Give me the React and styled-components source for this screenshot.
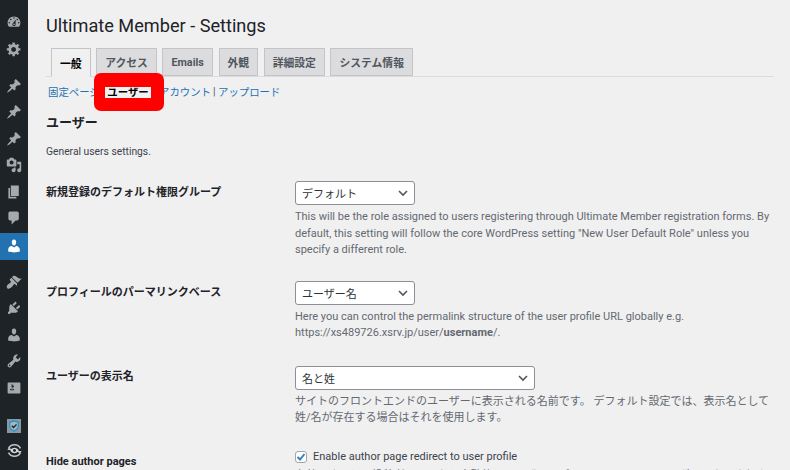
import React from "react";
import styled, { createGlobalStyle } from "styled-components";

const Global = createGlobalStyle`
  html, body { margin: 0; padding: 0; width: 790px; height: 470px; overflow: hidden; background: #f0f0f1; }
  body { font-family: Roboto, "Noto Sans CJK JP", sans-serif; font-size: 11px; color: #3c434a; }
  #root { height: 470px; }
`;
const Page = styled.div`display: flex; width: 790px; height: 470px; overflow: hidden; position: relative;`;
const Sidebar = styled.nav`
  width: 28px; flex: none; background: #1d2327; display: flex; flex-direction: column; padding-top: 12px; box-sizing: border-box;
`;
const MenuItem = styled.div`
  height: ${p => p.$h || 26.5}px; margin-top: ${p => p.$mt || 0}px; display: flex; align-items: center; justify-content: center; flex: none;
  background: ${p => p.$active ? "#2271b1" : "transparent"};
  color: ${p => p.$active ? "#fff" : "#a7aaad"};
  svg { width: 16px; height: 16px; fill: currentColor; display: block; }
`;
const Main = styled.main`flex: 1; padding: 0 16px 0 18px; min-width: 0;`;
const Title = styled.h1`margin: 15px 0 0; font-size: 18.15px; line-height: 22px; font-weight: 400; color: #1d2327;`;
const Tabs = styled.div`
  display: flex; gap: 5.6px; margin-top: 11px; padding-left: 5px; height: 28px; border-bottom: 1px solid #dcdcde;
`;
const Tab = styled.div`
  box-sizing: border-box; height: ${p => p.$active ? 29 : 28}px; padding: 0 8px; display: flex; align-items: center;
  border: 1px solid #c3c4c7; ${p => p.$active ? "border-bottom-color: #f0f0f1;" : ""}
  background: ${p => p.$active ? "#f0f0f1" : "#dcdcde"};
  color: ${p => p.$active ? "#000" : "#50575e"}; font-size: 10.8px; font-weight: 700; white-space: nowrap;
`;
const SubNav = styled.div`display: flex; margin-top: 6px; padding-left: 2px; height: 16px; align-items: center; font-size: 10.4px; color: #2271b1; white-space: nowrap;`;
const SubLink = styled.span`width: ${p => p.$w}px; flex: none;`;
const Sep = styled.span`color: #50575e; width: ${p => p.$w || 5}px; flex: none;`;
const Callout = styled.div`
  position: absolute; left: 94px; top: 73px; width: 70px; height: 38px; background: #ff0000; border-radius: 7px;
  display: flex; align-items: center; justify-content: center;
`;
const CalloutLabel = styled.span`
  background: #f0f0f1; color: #000; font-size: 10.4px; line-height: 11px; font-weight: 700; padding: 0 2px; position: relative; left: -1px;
`;
const SectionTitle = styled.h2`margin: 16px 0 0; font-size: 13px; line-height: 16px; font-weight: 700; color: #1d2327;`;
const Intro = styled.p`margin: 13px 0 0; font-size: 10.3px; line-height: 16px; color: #3c434a;`;
const Form = styled.div`margin-top: 21px; display: grid; grid-template-columns: 249px 1fr;`;
const Label = styled.div`font-size: 11px; line-height: 16px; font-weight: 700; color: #1d2327; padding-top: 4px; margin-top: ${p => p.$mt || 0}px;`;
const Field = styled.div`margin-top: ${p => p.$mt || 0}px; min-width: 0;`;
const Select = styled.div`
  box-sizing: border-box; width: ${p => p.$w}px; height: 24px; background: #fff; border: 1px solid #8c8f94; border-radius: 3px;
  display: flex; align-items: center; justify-content: space-between; padding: 0 5px 0 6px; font-size: 11px; color: #2c3338;
  svg { width: 12px; height: 12px; stroke: #50575e; fill: none; stroke-width: 1.6; }
`;
const Desc = styled.p`margin: ${p => p.$mt ?? 4}px 0 0; font-size: 11px; line-height: 16.5px; color: #646970;`;
const CheckRow = styled.div`display: flex; align-items: center; gap: 6px; font-size: 11px; line-height: 14px; color: #3c434a;`;
const Check = styled.span`
  box-sizing: border-box; width: 12px; height: 12px; background: #fff; border: 1px solid #a2a5a9; border-radius: 3px; display: flex; align-items: center; justify-content: center; flex: none;
  svg { width: 12px; height: 12px; stroke: #2f80c2; fill: none; stroke-width: 1.9; flex: none; }
`;

const Chevron = () => <svg viewBox="0 0 12 12"><path d="M2 4l4 4 4-4" /></svg>;
const D = ({ d }) => <svg viewBox="0 0 20 20"><path d={d} /></svg>;
const P = {
  dash: "M3.76 16h12.48c1.1-1.37 1.76-3.11 1.76-5 0-4.42-3.58-8-8-8s-8 3.58-8 8c0 1.89.66 3.63 1.76 5zM10 4c.55 0 1 .45 1 1s-.45 1-1 1-1-.45-1-1 .45-1 1-1zM6 6c.55 0 1 .45 1 1s-.45 1-1 1-1-.45-1-1 .45-1 1-1zm8 0c.55 0 1 .45 1 1s-.45 1-1 1-1-.45-1-1 .45-1 1-1zm-5.37 5.55L12 7v6c0 1.1-.9 2-2 2s-2-.9-2-2c0-.57.24-1.08.63-1.45zM4 10c.55 0 1 .45 1 1s-.45 1-1 1-1-.45-1-1 .45-1 1-1zm12 0c.55 0 1 .45 1 1s-.45 1-1 1-1-.45-1-1 .45-1 1-1zm-5 3c0-.55-.45-1-1-1s-1 .45-1 1 .45 1 1 1 1-.45 1-1z",
  gear: "M18 12h-2.18c-.17.7-.44 1.35-.81 1.93l1.54 1.54-2.1 2.1-1.54-1.54c-.58.36-1.23.63-1.91.79V19H8v-2.18c-.68-.16-1.33-.43-1.91-.79l-1.54 1.54-2.12-2.12 1.54-1.54c-.36-.58-.63-1.23-.79-1.91H1V9.03h2.17c.16-.7.44-1.35.8-1.94L2.43 5.55l2.1-2.1 1.54 1.54c.58-.37 1.24-.64 1.93-.81V2h3v2.18c.68.16 1.33.43 1.91.79l1.54-1.54 2.12 2.12-1.54 1.54c.36.59.64 1.24.8 1.94H18V12zm-8.5 1.5c1.66 0 3-1.34 3-3s-1.34-3-3-3-3 1.34-3 3 1.34 3 3 3z",
  pin: "M10.44 3.02l1.82-1.82 6.36 6.35-1.83 1.82c-1.05-.68-2.48-.57-3.41.36l-.75.75c-.92.93-1.04 2.35-.35 3.41l-1.83 1.82-2.41-2.41-2.8 2.79c-.42.42-3.38 2.71-3.8 2.29s1.86-3.39 2.28-3.81l2.79-2.79L4.1 9.36l1.83-1.82c1.05.69 2.48.57 3.41-.36l.75-.75c.93-.92 1.04-2.35.35-3.41z",
  media: "M13 11V4c0-.55-.45-1-1-1h-1.67L9 1H5L3.67 3H2c-.55 0-1 .45-1 1v7c0 .55.45 1 1 1h10c.55 0 1-.45 1-1zM7 4.5c1.38 0 2.5 1.12 2.5 2.5S8.38 9.5 7 9.5 4.5 8.38 4.5 7 5.62 4.5 7 4.5zM14 6h5v10.5c0 1.38-1.12 2.5-2.5 2.5S14 17.88 14 16.5s1.12-2.5 2.5-2.5c.17 0 .34.02.5.05V9h-3V6zm-4 8.05V13h2v3.5c0 1.38-1.12 2.5-2.5 2.5S7 17.88 7 16.5 8.12 14 9.5 14c.17 0 .34.02.5.05z",
  pages: "M6 15V2h10v13H6zm-1 1h8v2H3V5h2v11z",
  comment: "M5 2h9c1.1 0 2 .9 2 2v7c0 1.1-.9 2-2 2h-2l-5 5v-5H5c-1.1 0-2-.9-2-2V4c0-1.1.9-2 2-2z",
  user: "M10 9.25c-2.27 0-2.73-3.44-2.73-3.44C7 4.02 7.82 2 9.97 2c2.16 0 2.98 2.02 2.71 3.81 0 0-.41 3.44-2.68 3.44zm0 2.57L12.72 10c2.39 0 4.52 2.33 4.52 4.53v2.49s-3.65 1.13-7.24 1.13c-3.65 0-7.24-1.13-7.24-1.13v-2.49c0-2.25 1.94-4.48 4.47-4.48z",
  brush: "M14.48 11.06L7.41 3.99l1.5-1.5c.5-.56 2.3-.47 3.51.32 1.21.8 1.43 1.28 2.91 2.1 1.18.64 2.45 1.26 4.45.85zm-.71.71L6.7 4.7 4.93 6.47c-.39.39-.39 1.02 0 1.41l1.06 1.06c.39.39.39 1.03 0 1.42-.6.6-1.43 1.11-2.21 1.69-.35.26-.7.53-1.01.84C1.43 13.73 0 16.18 1.59 17.77c1.59 1.59 4.05.15 5.89-1.68.31-.31.58-.66.84-1.01.59-.78 1.09-1.6 1.69-2.21.39-.39 1.03-.39 1.42 0l1.06 1.06c.39.39 1.02.39 1.41 0z",
  plug: "M13.11 4.36L9.87 7.6 8 5.73l3.24-3.24c.35-.34 1.05-.2 1.56.32.52.51.66 1.21.31 1.55zm-8 1.77l.91-1.12 9.01 9.01-1.19.84c-.71.71-2.63 1.16-3.82 1.16H6.14L4.9 17.26c-.59.59-1.54.59-2.12 0-.59-.58-.59-1.53 0-2.12l1.24-1.24v-3.88c0-1.13.4-3.19 1.09-3.89zm7.26 3.97l3.24-3.24c.34-.35 1.04-.21 1.55.31.52.51.66 1.21.31 1.55l-3.24 3.25z",
  wrench: "M16.68 9.77c-1.34 1.34-3.3 1.67-4.95.99l-5.41 6.52c-.99.99-2.59.99-3.58 0s-.99-2.59 0-3.57l6.52-5.42c-.68-1.65-.35-3.61.99-4.95 1.28-1.28 3.12-1.62 4.72-1.06l-2.89 2.89 2.82 2.82 2.86-2.87c.53 1.58.18 3.39-1.08 4.65zM3.81 16.21c.4.39 1.04.39 1.43 0 .4-.4.4-1.04 0-1.43-.39-.4-1.03-.4-1.43 0-.39.39-.39 1.03 0 1.43z",
  sliders: "M18 16V4c0-.55-.45-1-1-1H3c-.55 0-1 .45-1 1v12c0 .55.45 1 1 1h14c.55 0 1-.45 1-1zM8 11h1c.55 0 1 .45 1 1s-.45 1-1 1H8v1.5c0 .28-.22.5-.5.5s-.5-.22-.5-.5V13H6c-.55 0-1-.45-1-1s.45-1 1-1h1V5.5c0-.28.22-.5.5-.5s.5.22.5.5V7h1c.55 0 1 .45 1 1s-.45 1-1 1h-1v5.5c0 .28-.22.5-.5.5s-.5-.22-.5-.5V9z",
};
const Shield = () => (
  <svg viewBox="0 0 14 14" style={{ width: 14, height: 14 }}>
    <rect width="14" height="14" fill="#8b989f" />
    <path d="M7 1.800l4.300 1.500v3.500c0 2.800-1.900 4.300-4.300 5.300-2.400-1-4.300-2.500-4.300-5.300V3.300z" fill="#a9b5bb" stroke="#2296d3" strokeWidth="1.300" />
    <path d="M4.800 6.800l1.700 1.700 3-3" fill="none" stroke="#16242c" strokeWidth="1.300" />
  </svg>
);
const Ring = () => (
  <svg viewBox="0 0 20 20" style={{ width: 17, height: 17 }}>
    <path d="M3 7.500A7.800 7.800 0 0 1 17 7.500M17 12.500A7.800 7.800 0 0 1 3 12.500" fill="none" stroke="#c3c4c7" strokeWidth="1.800" />
    <path d="M1.500 9.500L4 6 6.500 9.500zM18.500 10.500L16 14l-2.500-3.500z" fill="#c3c4c7" />
    <path d="M5 10c1.100-2.100 3-3.200 5-3.200s3.900 1.100 5 3.200c-1.100 2.100-3 3.200-5 3.200s-3.900-1.100-5-3.200z" fill="#d5d6d8" />
    <circle cx="10" cy="10" r="1.700" fill="#1d2327" />
  </svg>
);

export default function App() {
  return (
    <Page>
      <Global />
      <Sidebar>
        <MenuItem $h={20}><D d={P.dash} /></MenuItem>
        <MenuItem $mt={4}><D d={P.gear} /></MenuItem>
        <MenuItem $mt={10}><D d={P.pin} /></MenuItem>
        <MenuItem><D d={P.pin} /></MenuItem>
        <MenuItem><D d={P.pin} /></MenuItem>
        <MenuItem><D d={P.media} /></MenuItem>
        <MenuItem><D d={P.pages} /></MenuItem>
        <MenuItem><D d={P.comment} /></MenuItem>
        <MenuItem $active $h={27} $mt={1}><D d={P.user} /></MenuItem>
        <MenuItem $mt={9}><D d={P.brush} /></MenuItem>
        <MenuItem><D d={P.plug} /></MenuItem>
        <MenuItem><D d={P.user} /></MenuItem>
        <MenuItem><D d={P.wrench} /></MenuItem>
        <MenuItem><D d={P.sliders} /></MenuItem>
        <MenuItem $mt={12} $h={26}><Shield /></MenuItem>
        <MenuItem $h={22}><Ring /></MenuItem>
      </Sidebar>
      <Main>
        <Title>Ultimate Member - Settings</Title>
        <Tabs>
          <Tab $active>一般</Tab>
          <Tab>アクセス</Tab>
          <Tab>Emails</Tab>
          <Tab>外観</Tab>
          <Tab>詳細設定</Tab>
          <Tab>システム情報</Tab>
        </Tabs>
        <SubNav>
          <SubLink $w={52}>固定ページ</SubLink>
          <Sep $w={7}>|</Sep>
          <SubLink $w={52}>ユーザー</SubLink>
          <SubLink $w={54}>アカウント</SubLink>
          <Sep>|</Sep>
          <SubLink $w={62}>アップロード</SubLink>
        </SubNav>
        <SectionTitle>ユーザー</SectionTitle>
        <Intro>General users settings.</Intro>
        <Form>
          <Label>新規登録のデフォルト権限グループ</Label>
          <Field>
            <Select $w={120}>デフォルト<Chevron /></Select>
            <Desc>This will be the role assigned to users registering through Ultimate Member registration forms. By default, this setting will follow the core WordPress setting "New User Default Role" unless you specify a different role.</Desc>
          </Field>
          <Label $mt={22}>プロフィールのパーマリンクベース</Label>
          <Field $mt={22}>
            <Select $w={120}>ユーザー名<Chevron /></Select>
            <Desc>Here you can control the permalink structure of the user profile URL globally e.g.<br />https://xs489726.xsrv.jp/user/<b>username</b>/.</Desc>
          </Field>
          <Label $mt={23}>ユーザーの表示名</Label>
          <Field $mt={24}>
            <Select $w={240}>名と姓<Chevron /></Select>
            <Desc>サイトのフロントエンドのユーザーに表示される名前です。 デフォルト設定では、表示名として姓/名が存在する場合はそれを使用します。</Desc>
          </Field>
          <Label $mt={23}>Hide author pages</Label>
          <Field $mt={23}>
            <CheckRow>
              <Check><svg viewBox="0 0 12 12"><path d="M2.500 6l2.500 2.500L9.500 3" /></svg></Check>
              Enable author page redirect to user profile
            </CheckRow>
            <Desc $mt={4}>有効にすると、投稿者ページから自動的にユーザーのプロフィールページにリダイレクトされます。</Desc>
          </Field>
        </Form>
      </Main>
      <Callout><CalloutLabel>ユーザー</CalloutLabel></Callout>
    </Page>
  );
}
